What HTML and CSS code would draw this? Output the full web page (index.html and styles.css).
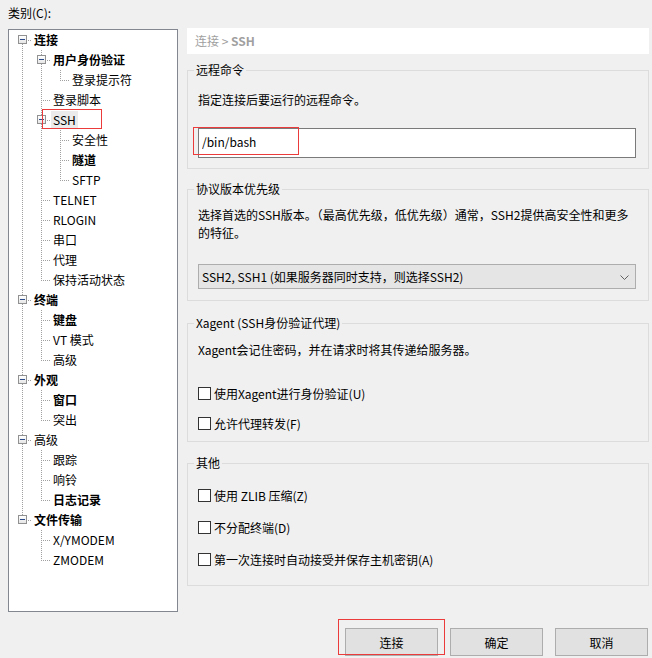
FILE: index.html
```html
<!DOCTYPE html>
<html lang="zh-CN">
<head>
  <meta charset="UTF-8">
  <title>会话属性 - SSH</title>
  <link rel="stylesheet" href="styles.css">
</head>
<body>

<div class="main">
  <div class="side">
    <div class="side-title">类别(C):</div>
    <div class="tree">
      <div class="row"><i class="c f"><b class="box"></b></i><span class="lbl b">连接</span></div>
      <div class="row"><i class="c v"></i><i class="c t"><b class="box"></b></i><span class="lbl b">用户身份验证</span></div>
      <div class="row"><i class="c v"></i><i class="c v"></i><i class="c l"></i><span class="lbl">登录提示符</span></div>
      <div class="row"><i class="c v"></i><i class="c t"></i><span class="lbl">登录脚本</span></div>
      <div class="row"><i class="c v"></i><i class="c t"><b class="box"></b></i><span class="lbl sel">SSH</span><span class="mark mark-ssh"></span></div>
      <div class="row"><i class="c v"></i><i class="c v"></i><i class="c t"></i><span class="lbl">安全性</span></div>
      <div class="row"><i class="c v"></i><i class="c v"></i><i class="c t"></i><span class="lbl b">隧道</span></div>
      <div class="row"><i class="c v"></i><i class="c v"></i><i class="c l"></i><span class="lbl">SFTP</span></div>
      <div class="row"><i class="c v"></i><i class="c t"></i><span class="lbl">TELNET</span></div>
      <div class="row"><i class="c v"></i><i class="c t"></i><span class="lbl">RLOGIN</span></div>
      <div class="row"><i class="c v"></i><i class="c t"></i><span class="lbl">串口</span></div>
      <div class="row"><i class="c v"></i><i class="c t"></i><span class="lbl">代理</span></div>
      <div class="row"><i class="c v"></i><i class="c l"></i><span class="lbl">保持活动状态</span></div>
      <div class="row"><i class="c t"><b class="box"></b></i><span class="lbl b">终端</span></div>
      <div class="row"><i class="c v"></i><i class="c t"></i><span class="lbl b">键盘</span></div>
      <div class="row"><i class="c v"></i><i class="c t"></i><span class="lbl">VT 模式</span></div>
      <div class="row"><i class="c v"></i><i class="c l"></i><span class="lbl">高级</span></div>
      <div class="row"><i class="c t"><b class="box"></b></i><span class="lbl b">外观</span></div>
      <div class="row"><i class="c v"></i><i class="c t"></i><span class="lbl b">窗口</span></div>
      <div class="row"><i class="c v"></i><i class="c l"></i><span class="lbl">突出</span></div>
      <div class="row"><i class="c t"><b class="box"></b></i><span class="lbl">高级</span></div>
      <div class="row"><i class="c v"></i><i class="c t"></i><span class="lbl">跟踪</span></div>
      <div class="row"><i class="c v"></i><i class="c t"></i><span class="lbl">响铃</span></div>
      <div class="row"><i class="c v"></i><i class="c l"></i><span class="lbl b">日志记录</span></div>
      <div class="row"><i class="c l"><b class="box"></b></i><span class="lbl b">文件传输</span></div>
      <div class="row"><i class="c"></i><i class="c t"></i><span class="lbl">X/YMODEM</span></div>
      <div class="row"><i class="c"></i><i class="c l"></i><span class="lbl">ZMODEM</span></div>
    </div>
  </div>

  <div class="content">
    <div class="crumb">连接 &gt; <b>SSH</b></div>

    <fieldset class="grp g1">
      <legend>远程命令</legend>
      <div class="desc">指定连接后要运行的远程命令。</div>
      <div class="field">
        <input class="cmd" type="text" value="/bin/bash">
        <span class="mark mark-cmd"></span>
      </div>
    </fieldset>

    <fieldset class="grp g2">
      <legend>协议版本优先级</legend>
      <div class="desc">选择首选的SSH版本。（最高优先级，低优先级）通常，SSH2提供高安全性和更多<br>的特征。</div>
      <div class="select">
        <span>SSH2, SSH1 (如果服务器同时支持，则选择SSH2)</span>
        <svg width="9" height="5" viewBox="0 0 9 5"><polyline points="0.5,0.5 4.5,4.5 8.5,0.5" fill="none" stroke="#606060" stroke-width="1"/></svg>
      </div>
    </fieldset>

    <fieldset class="grp g3">
      <legend>Xagent (SSH身份验证代理)</legend>
      <div class="desc">Xagent会记住密码，并在请求时将其传递给服务器。</div>
      <div class="checks">
        <label class="check"><span class="box-c"></span>使用Xagent进行身份验证(U)</label>
        <label class="check"><span class="box-c"></span>允许代理转发(F)</label>
      </div>
    </fieldset>

    <fieldset class="grp g4">
      <legend>其他</legend>
      <div class="checks">
        <label class="check"><span class="box-c"></span>使用 ZLIB 压缩(Z)</label>
        <label class="check"><span class="box-c"></span>不分配终端(D)</label>
        <label class="check"><span class="box-c"></span>第一次连接时自动接受并保存主机密钥(A)</label>
      </div>
    </fieldset>
  </div>
</div>

<div class="buttons">
  <button class="btn">连接<span class="mark mark-btn"></span></button>
  <button class="btn">确定</button>
  <button class="btn">取消</button>
</div>

</body>
</html>
```

FILE: styles.css
```css
body {
  margin: 0;
  background: #f0f0f0;
  font-family: "Noto Sans CJK SC", "Noto Sans", sans-serif;
  font-size: 12px;
  color: #000;
  --vd: repeating-linear-gradient(#a0a0a0 0 1px, transparent 1px 2px);
  --hd: repeating-linear-gradient(90deg, #a0a0a0 0 1px, transparent 1px 2px);
}
.main {
  display: flex;
  gap: 9px;
  padding: 0 3px 0 8px;
}
.side {
  width: 170px;
  flex: none;
}
.side-title {
  line-height: 16px;
  padding-top: 5px;
  margin-bottom: 8px;
}

/* tree */
.tree {
  height: 583px;
  box-sizing: border-box;
  border: 1px solid #828790;
  background: #fff;
  padding-left: 3px;
}
.row {
  display: flex;
  height: 20px;
  position: relative;
}
.c {
  width: 19px;
  flex: none;
}
.v {
  background: var(--vd) 10px 0 / 1px 20px no-repeat;
}
.t {
  background: var(--vd) 10px 0 / 1px 20px no-repeat, var(--hd) 12px 10px / 7px 1px no-repeat;
}
.l {
  background: var(--vd) 10px 0 / 1px 11px no-repeat, var(--hd) 12px 10px / 7px 1px no-repeat;
}
.f {
  background: var(--vd) 10px 10px / 1px 10px no-repeat, var(--hd) 12px 10px / 7px 1px no-repeat;
}
.box {
  display: block;
  width: 9px;
  height: 9px;
  box-sizing: border-box;
  margin: 5px 0 0 6px;
  border: 1px solid #919191;
  background: linear-gradient(#2a4a8c, #2a4a8c) center / 5px 1px no-repeat, linear-gradient(#fff, #e6e6e6);
}
.lbl {
  margin: 1px 0 0 1px;
  padding: 0 2px;
  height: 18px;
  line-height: 18px;
  white-space: nowrap;
}
.lbl.b {
  font-weight: bold;
}
.lbl.sel {
  background: #ebebeb;
}

/* red highlight marks */
.mark {
  position: absolute;
  box-sizing: border-box;
  border: 1px solid #ec3b3b;
  pointer-events: none;
}
.mark-ssh {
  left: 30px;
  top: -1px;
  width: 60px;
  height: 20px;
}
.mark-cmd {
  left: -5px;
  top: -1px;
  width: 106px;
  height: 28px;
}
.mark-btn {
  left: -8px;
  top: -10px;
  width: 107px;
  height: 36px;
}

/* right side */
.content {
  flex: 1;
  min-width: 0;
  padding-top: 28px;
}
.crumb {
  background: #fff;
  height: 26px;
  line-height: 26px;
  padding-left: 8px;
  color: #a0a0a0;
}
.grp {
  margin: 0;
  min-width: 0;
  border: 1px solid #dcdcdc;
  padding: 0 12px 0 10px;
}
.grp legend {
  padding: 0 2px;
  margin-left: -4px;
  line-height: 16px;
}
.desc {
  line-height: 18px;
  white-space: nowrap;
}
.g1 {
  margin-top: 8px;
  padding-bottom: 10px;
}
.g1 .desc {
  margin-top: 13px;
}
.field {
  position: relative;
  margin-top: 19px;
}
.cmd {
  display: block;
  width: 100%;
  height: 30px;
  box-sizing: border-box;
  margin: 0;
  border: 1px solid #7a7a7a;
  padding: 0 3px 4px;
  font: inherit;
  background: #fff;
  outline: none;
}
.g2 {
  margin-top: 12px;
  padding-bottom: 11px;
}
.g2 .desc {
  margin-top: 9px;
}
.select {
  display: flex;
  align-items: center;
  justify-content: space-between;
  margin-top: 22px;
  height: 25px;
  box-sizing: border-box;
  border: 1px solid #adadad;
  background: #e5e5e5;
  padding: 0 6px 0 3px;
}
.select svg {
  margin-top: 1px;
}
.g3 {
  margin-top: 14px;
  padding-bottom: 9px;
}
.g3 .desc {
  margin-top: 10px;
}
.g3 .checks {
  margin-top: 25px;
  gap: 12px;
}
.g4 {
  margin-top: 13px;
  padding-bottom: 17px;
}
.g4 .checks {
  margin-top: 15px;
  gap: 14px;
}
.checks {
  display: flex;
  flex-direction: column;
}
.check {
  display: flex;
  align-items: center;
  gap: 3px;
  height: 18px;
}
.box-c {
  width: 13px;
  height: 13px;
  box-sizing: border-box;
  border: 1px solid #333;
  background: #fff;
}

/* bottom buttons */
.buttons {
  display: flex;
  justify-content: flex-end;
  gap: 12px;
  padding-right: 4px;
  margin-top: 16px;
}
.btn {
  position: relative;
  width: 93px;
  height: 28px;
  border: 1px solid #adadad;
  background: #e1e1e1;
  font: inherit;
  color: #000;
  padding: 0;
}
```
